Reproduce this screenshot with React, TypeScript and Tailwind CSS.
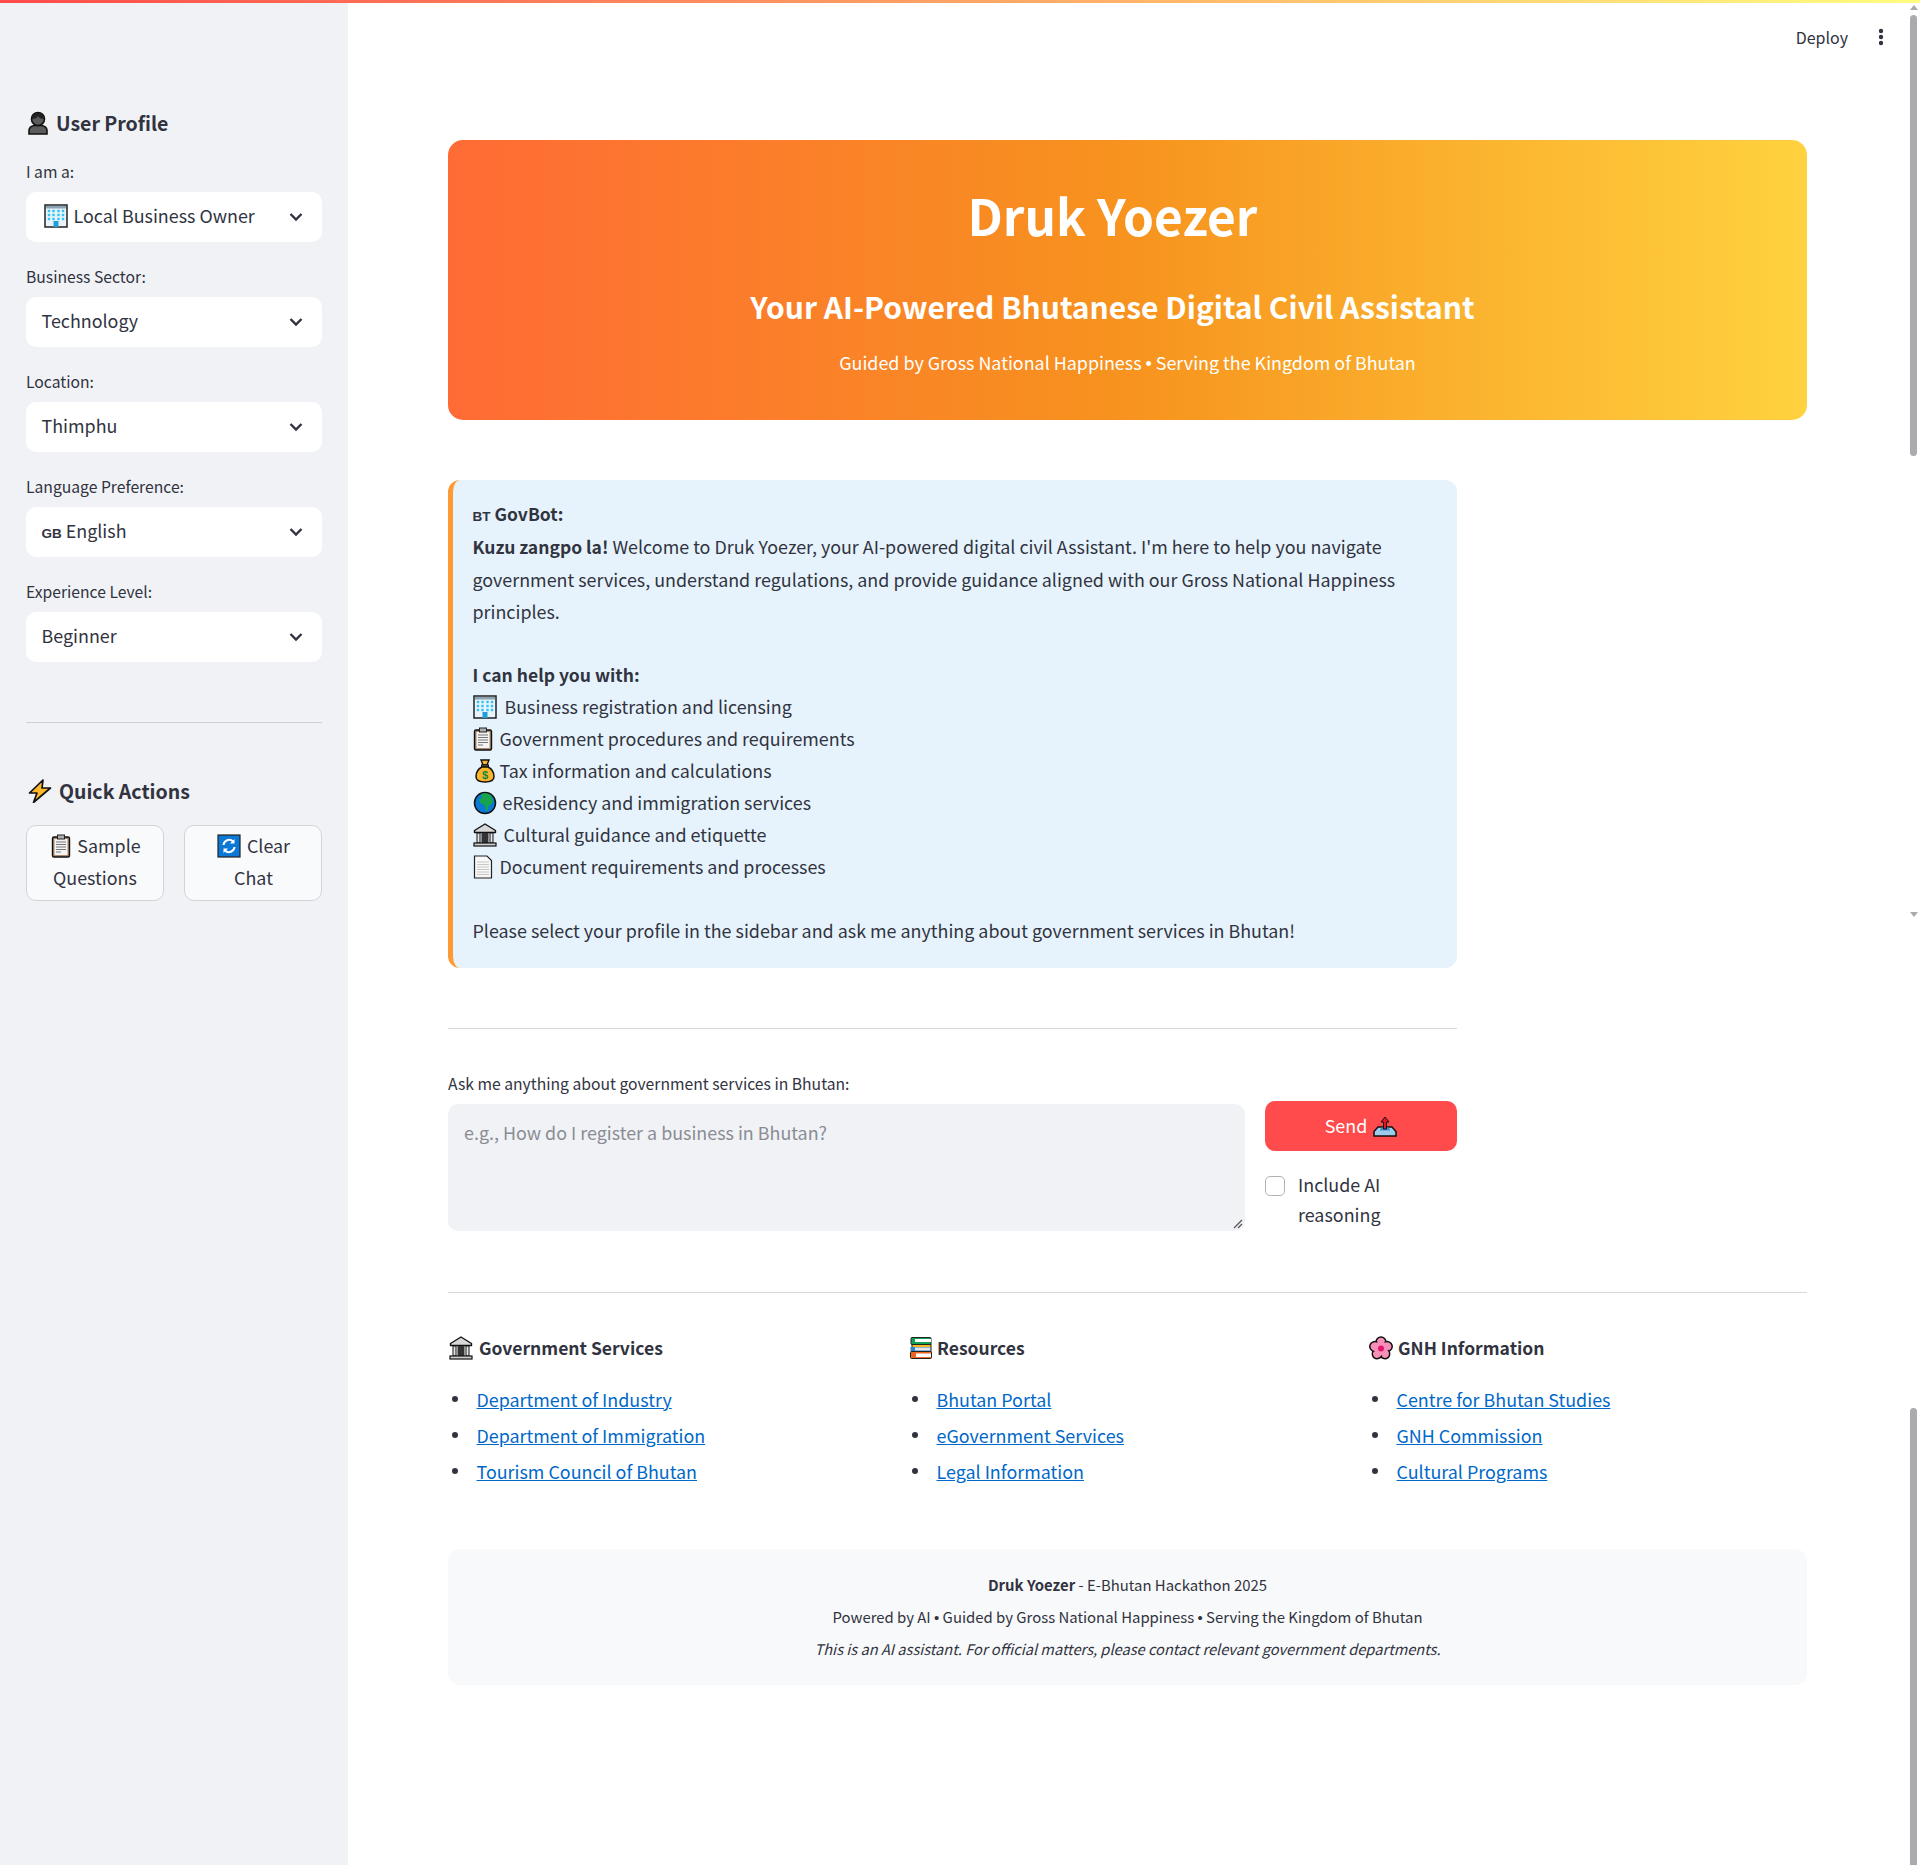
import type { ReactNode } from "react";

type IconProps = { className?: string };

function Emoji({ className = "", children }: { className?: string; children: ReactNode }) {
  return (
    <svg viewBox="0 0 24 24" className={`inline-block align-[-5px] w-[24px] h-[24px] ${className}`}>
      {children}
    </svg>
  );
}

const PersonIcon = ({ className }: IconProps) => (
  <Emoji className={className}>
    <path d="M3 23v-3.500c0-3 2.500-4.500 5.500-5h7c3 .5 5.500 2 5.500 5V23z" fill="#5c5c5c" stroke="#111" strokeWidth="1.600" />
    <circle cx="12" cy="8" r="6.500" fill="#5c5c5c" stroke="#111" strokeWidth="1.600" />
    <path d="M6 8c3 0 5-1 6-3 1 2 3 3 6 3-.5-4-3-6-6-6S6.500 4 6 8z" fill="#222" />
  </Emoji>
);

const OfficeIcon = ({ className }: IconProps) => (
  <Emoji className={className}>
    <rect x="1" y="1" width="22" height="22" fill="#e8f4fa" stroke="#222" strokeWidth="1.500" />
    <rect x="2" y="2" width="20" height="2.500" fill="#8aa4b4" />
    {[5, 9.500, 14.500, 19].map((x) =>
      [7, 11, 15].map((y) => <rect key={`${x}-${y}`} x={x - 1.200} y={y - 1.200} width="2.400" height="2.400" fill="#2fc4f2" />),
    )}
    <rect x="9.500" y="17" width="5" height="6" fill="#1e9fdc" />
  </Emoji>
);

const ClipboardIcon = ({ className }: IconProps) => (
  <Emoji className={className}>
    <rect x="3.500" y="3" width="17" height="20" rx="1.500" fill="#a98a6b" stroke="#111" strokeWidth="1.400" />
    <rect x="5.500" y="5" width="13" height="16" fill="#f4f4f4" />
    <rect x="8.500" y="1" width="7" height="4" fill="#b0b0b0" stroke="#222" strokeWidth="1" />
    <path d="M7 8h10M7 10.500h10M7 13h10M7 15.500h10M7 18h5" stroke="#777" strokeWidth="1" />
  </Emoji>
);

const RefreshIcon = ({ className }: IconProps) => (
  <Emoji className={className}>
    <rect x="1" y="1" width="22" height="22" fill="#0a78d4" stroke="#222" strokeWidth="1.200" />
    <path d="M6.500 11a5.600 5.600 0 0 1 9.500-3.500M17.500 13a5.600 5.600 0 0 1-9.500 3.500" fill="none" stroke="#fff" strokeWidth="2" />
    <path d="M17.500 5v4.500H13zM6.500 19v-4.500H11z" fill="#fff" />
  </Emoji>
);

const BoltIcon = ({ className }: IconProps) => (
  <Emoji className={className}>
    <path d="M15 1 1.500 14H9l-3.500 9.500L22.500 9H14z" fill="#fdb92e" stroke="#111" strokeWidth="1.700" strokeLinejoin="round" />
  </Emoji>
);

const MoneyBagIcon = ({ className }: IconProps) => (
  <Emoji className={className}>
    <path d="M8 1h8l-2 5h-4z" fill="#fcb42a" stroke="#111" strokeWidth="1.400" />
    <rect x="8.500" y="6" width="7" height="2" fill="#8a6a4a" stroke="#111" strokeWidth="1" />
    <path d="M9 8c-4 2-6 6-6 9.500C3 21.500 6.500 23 12 23s9-1.500 9-5.500C21 14 19 10 15 8z" fill="#fcb42a" stroke="#111" strokeWidth="1.500" />
    <text x="12" y="20" textAnchor="middle" fontSize="11" fontWeight="700" fill="#0f8a3c" fontFamily="Liberation Sans, sans-serif">
      $
    </text>
  </Emoji>
);

const GlobeIcon = ({ className }: IconProps) => (
  <Emoji className={className}>
    <circle cx="12" cy="12" r="10.500" fill="#0a78d4" stroke="#111" strokeWidth="1.500" />
    <path d="M8 3c3-1.500 7-1 10 1l2 5-1 4-3 1-1 5-2 1-1-5-2-2-3-1-1-4 3-1z" fill="#16a34a" />
  </Emoji>
);

const BankIcon = ({ className }: IconProps) => (
  <Emoji className={className}>
    <path d="M12 1 1.500 7.500v2h21v-2z" fill="#d8d8d8" stroke="#111" strokeWidth="1.400" strokeLinejoin="round" />
    <rect x="8.500" y="10" width="7" height="10" fill="#333" />
    <rect x="4" y="10" width="3" height="10" fill="#e6e6e6" stroke="#111" strokeWidth="1" />
    <rect x="17" y="10" width="3" height="10" fill="#e6e6e6" stroke="#111" strokeWidth="1" />
    <rect x="1" y="20" width="22" height="3" fill="#cfcfcf" stroke="#111" strokeWidth="1.200" />
  </Emoji>
);

const PageIcon = ({ className }: IconProps) => (
  <Emoji className={className}>
    <path d="M3.500 1h12.500l4.500 4.500V23h-17z" fill="#f7f7f7" stroke="#222" strokeWidth="1.200" />
    <path d="M6 7h12M6 9.500h12M6 12h12M6 14.500h12M6 17h12M6 19.500h12" stroke="#c8c8c8" strokeWidth="1" />
  </Emoji>
);

const OutboxIcon = ({ className }: IconProps) => (
  <Emoji className={className}>
    <path d="M5 13h14l4 4.500V22H1v-4.500z" fill="#9ccbeb" stroke="#111" strokeWidth="1.500" />
    <path d="M8 13.500h8l1 3H7z" fill="#3f8fd0" />
    <path d="M12 3 8 8h2.500v7h3V8H16z" fill="#e5142b" stroke="#111" strokeWidth="1" />
  </Emoji>
);

const BooksIcon = ({ className }: IconProps) => (
  <Emoji className={className}>
    <rect x="2" y="1.500" width="20" height="7" rx="1" fill="#12a150" stroke="#222" strokeWidth="1" />
    <rect x="6" y="3" width="16" height="3" fill="#fff" />
    <rect x="3" y="8.500" width="19" height="7" fill="#f4b91f" stroke="#222" strokeWidth="1" />
    <rect x="1.500" y="11" width="20" height="4.500" fill="#2b86d9" />
    <rect x="6" y="11.500" width="15" height="3" fill="#e6e6e6" />
    <rect x="1.500" y="15.500" width="21" height="7" rx="1" fill="#f0641e" stroke="#222" strokeWidth="1" />
    <rect x="7" y="17.500" width="15" height="3.500" fill="#fff" />
  </Emoji>
);

const BlossomIcon = ({ className }: IconProps) => (
  <Emoji className={className}>
    {[0, 72, 144, 216, 288].map((a) => (
      <ellipse key={a} cx="12" cy="6.500" rx="5" ry="5.500" fill="#f78fb8" stroke="#111" strokeWidth="1.500" transform={`rotate(${a} 12 12.500)`} />
    ))}
    {[0, 72, 144, 216, 288].map((a) => (
      <ellipse key={a} cx="12" cy="7" rx="3.600" ry="4.200" fill="#f78fb8" transform={`rotate(${a} 12 12.500)`} />
    ))}
    <circle cx="12" cy="12.500" r="3" fill="#e0196e" />
  </Emoji>
);

function ChevronDown() {
  return (
    <svg viewBox="0 0 14 10" className="w-[14px] h-[10px]">
      <path d="M1.500 2 7 7.500 12.500 2" fill="none" stroke="#31333f" strokeWidth="2.400" />
    </svg>
  );
}

function FlagText({ code }: { code: string }) {
  return <span className="font-['Liberation_Sans',sans-serif] font-bold text-[13.500px] leading-[0] mr-[4px]">{code}</span>;
}

// the CJK bullet is full width, this one is not
function Dot() {
  return <span className="font-['Liberation_Sans',sans-serif] leading-[0]">•</span>;
}

function SidebarSelect({ label, value, icon }: { label: string; value: ReactNode; icon?: ReactNode }) {
  return (
    <div className="mb-[23px]">
      <div className="text-[15.700px] leading-[23px] mb-[9px]">{label}</div>
      <div className="h-[50px] rounded-[10px] bg-white flex items-center justify-between pl-[15.500px] pr-[19px]">
        <span className="text-[17.900px] leading-[32px] whitespace-nowrap mt-[-5px]">
          {icon}
          {value}
        </span>
        <ChevronDown />
      </div>
    </div>
  );
}

function LinkColumn({ icon, title, links }: { icon: ReactNode; title: string; links: string[] }) {
  return (
    <div className="w-[460px] shrink-0">
      <div className="flex items-center h-[32px] pl-[1px] font-semibold text-[17.500px] leading-[32px]">
        {icon}
        {title}
      </div>
      <ul className="mt-[19px] pl-[4px]">
        {links.map((link) => (
          <li key={link} className="flex items-center gap-[18.500px] h-[36.200px] pb-[4px] text-[17.900px] leading-[32px]">
            <span className="w-[6px] h-[6px] rounded-full bg-[#31333f]" />
            <a href="#" className="text-[#0068c9] underline">
              {link}
            </a>
          </li>
        ))}
      </ul>
    </div>
  );
}

const helpItems = [
  { icon: <OfficeIcon className="mr-[8px]" />, text: "Business registration and licensing" },
  { icon: <ClipboardIcon className="ml-[-2px] mr-[5px]" />, text: "Government procedures and requirements" },
  { icon: <MoneyBagIcon className="mr-[3px]" />, text: "Tax information and calculations" },
  { icon: <GlobeIcon className="mr-[6px]" />, text: "eResidency and immigration services" },
  { icon: <BankIcon className="mr-[7px]" />, text: "Cultural guidance and etiquette" },
  { icon: <PageIcon className="ml-[-2px] mr-[5px]" />, text: "Document requirements and processes" },
];

export default function App() {
  return (
    <div className="relative flex w-[1920px] h-[1865px] overflow-hidden bg-white text-[#31333f] font-['Noto_Sans_CJK_SC',sans-serif]">
      <div className="absolute top-0 left-0 right-0 h-[3px] bg-[linear-gradient(90deg,#ff4b4b,#fffd80)]" />

      <aside className="w-[348px] shrink-0 bg-[#f0f2f6] px-[26px] pt-[107px]">
        <h3 className="flex items-center gap-[6px] text-[19.500px] leading-[32px] font-semibold">
          <PersonIcon />
          User Profile
        </h3>
        <div className="mt-[21px] pb-[37px]">
          <SidebarSelect label="I am a:" value="Local Business Owner" icon={<OfficeIcon className="ml-[2px] mr-[6px]" />} />
          <SidebarSelect label="Business Sector:" value="Technology" />
          <SidebarSelect label="Location:" value="Thimphu" />
          <SidebarSelect label="Language Preference:" value="English" icon={<FlagText code="GB" />} />
          <SidebarSelect label="Experience Level:" value="Beginner" />
        </div>
        <div className="border-t border-[#cfd1d6]" />
        <h3 className="mt-[52px] flex items-center gap-[7px] pl-[2px] text-[19.500px] leading-[32px] font-semibold">
          <BoltIcon />
          Quick Actions
        </h3>
        <div className="mt-[18px] flex justify-between">
          <button className="w-[138px] h-[76px] rounded-[10px] border border-[#d2d4d9] bg-[#f9fafc] pb-[4px] text-[17.900px] leading-[32px]">
            <ClipboardIcon className="mr-[4px]" />
            Sample Questions
          </button>
          <button className="w-[138px] h-[76px] rounded-[10px] border border-[#d2d4d9] bg-[#f9fafc] pb-[4px] text-[17.900px] leading-[32px] pl-[21px] pr-[20px]">
            <RefreshIcon className="mr-[6px]" />
            Clear Chat
          </button>
        </div>
      </aside>

      <main className="flex-1 pl-[100px] pt-[140px]">
        <div className="w-[1359px]">
          <div className="h-[280px] rounded-[15px] bg-[linear-gradient(90deg,#ff6b35,#f7931e,#ffd23f)] flex flex-col items-center text-white">
            <h1 className="mt-[40px] pr-[30px] text-[49.500px] leading-[70px] font-bold">Druk Yoezer</h1>
            <h2 className="mt-[32px] pr-[30px] text-[30px] leading-[48px] font-semibold">Your AI-Powered Bhutanese Digital Civil Assistant</h2>
            <p className="mt-[16px] text-[17.900px] leading-[32px]">
              Guided by Gross National Happiness <Dot /> Serving the Kingdom of Bhutan
            </p>
          </div>

          <div className="mt-[60px] w-[1009px] h-[488px] rounded-[12px] border-l-[5px] border-[#ff9933] bg-[#e6f3fc] pl-[19.500px] pr-[20px] pt-[18px] text-[17.900px] leading-[32px]">
            <div className="h-[32px] font-semibold text-[17.500px]">
              <FlagText code="BT" />
              GovBot:
            </div>
            <p>
              <span className="font-semibold text-[17.500px]">Kuzu zangpo la!</span> Welcome to Druk Yoezer, your AI-powered digital civil Assistant. I'm here to help you navigate government services, understand regulations, and provide guidance aligned with our Gross National Happiness principles.
            </p>
            <div className="mt-[32px] font-semibold text-[17.500px]">I can help you with:</div>
            <div className="mt-[-1px]">
              {helpItems.map((item) => (
                <div key={item.text} className="h-[32px]">
                  {item.icon}
                  {item.text}
                </div>
              ))}
              <p className="mt-[32px]">Please select your profile in the sidebar and ask me anything about government services in Bhutan!</p>
            </div>
          </div>

          <div className="mt-[60px] w-[1009px] border-t border-[#d7d8db]" />

          <div className="mt-[42px] w-[1009px] flex gap-[20px]">
            <div className="w-[797px]">
              <div className="text-[15.700px] leading-[25px]">Ask me anything about government services in Bhutan:</div>
              <div className="relative mt-[8px] h-[127px] rounded-[10px] bg-[#f0f2f6] px-[16px] py-[12px] text-[17.900px] leading-[32px] text-[#8a8c94]">
                e.g., How do I register a business in Bhutan?
                <svg viewBox="0 0 10 10" className="absolute right-[2px] bottom-[2px] w-[10px] h-[10px]">
                  <path d="M1 9 9 1M5 9l4-4" stroke="#555" strokeWidth="1.200" />
                </svg>
              </div>
            </div>
            <div className="w-[192px] pt-[30px]">
              <button className="w-full h-[50px] rounded-[10px] bg-[#ff4b4b] pb-[3px] text-white text-[17.900px] leading-[32px]">
                Send <OutboxIcon className="ml-[2px]" />
              </button>
              <div className="mt-[18px] flex gap-[13px]">
                <div className="w-[20px] h-[20px] mt-[7px] shrink-0 rounded-[5px] border border-[#b0b2b8] bg-white" />
                <div className="text-[17.900px] leading-[30px] w-[110px]">Include AI reasoning</div>
              </div>
            </div>
          </div>

          <div className="mt-[61px] border-t border-[#d7d8db]" />

          <div className="mt-[39px] flex">
            <LinkColumn
              icon={<BankIcon className="mr-[6px]" />}
              title="Government Services"
              links={["Department of Industry", "Department of Immigration", "Tourism Council of Bhutan"]}
            />
            <LinkColumn icon={<BooksIcon className="mr-[4px]" />} title="Resources" links={["Bhutan Portal", "eGovernment Services", "Legal Information"]} />
            <LinkColumn icon={<BlossomIcon className="mr-[5px]" />} title="GNH Information" links={["Centre for Bhutan Studies", "GNH Commission", "Cultural Programs"]} />
          </div>

          <div className="mt-[57px] h-[136px] rounded-[12px] bg-[#f8f9fa] pt-[20px] text-center text-[14.900px] leading-[32px]">
            <div>
              <span className="font-semibold">Druk Yoezer</span> - E-Bhutan Hackathon 2025
            </div>
            <div>
              Powered by AI <Dot /> Guided by Gross National Happiness <Dot /> Serving the Kingdom of Bhutan
            </div>
            <div className="italic text-[14.650px]">This is an AI assistant. For official matters, please contact relevant government departments.</div>
          </div>
        </div>
      </main>

      <div className="absolute top-[19px] right-[36px] flex items-center gap-[30px]">
        <span className="text-[16px] leading-[36px]">Deploy</span>
        <svg viewBox="0 0 6 20" className="w-[6px] h-[20px]" fill="#31333f">
          <circle cx="3" cy="4" r="2.200" />
          <circle cx="3" cy="10" r="2.200" />
          <circle cx="3" cy="16" r="2.200" />
        </svg>
      </div>

      <div className="absolute top-[15px] right-[3px] w-[7px] h-[441px] rounded-full bg-[#aaabaf]" />
      <div className="absolute top-[1408px] right-[3px] w-[7px] h-[457px] rounded-t-full bg-[#aaabaf]" />
      <div className="absolute top-[5px] right-[2px] w-0 h-0 border-x-[4.500px] border-x-transparent border-b-[5px] border-b-[#aaabaf]" />
      <div className="absolute top-[912px] right-[2px] w-0 h-0 border-x-[4.500px] border-x-transparent border-t-[5px] border-t-[#aaabaf]" />
    </div>
  );
}
